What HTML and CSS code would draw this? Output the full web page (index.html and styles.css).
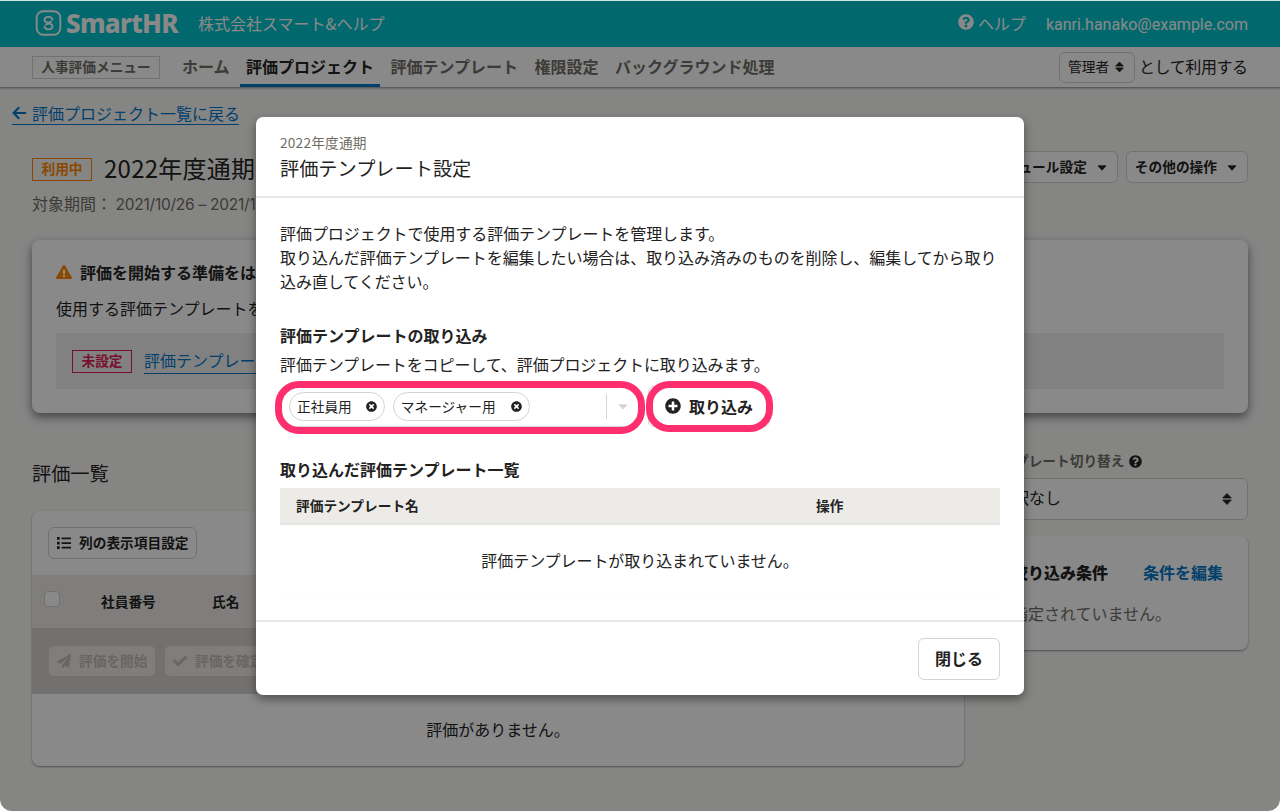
FILE: index.html
```html
<!DOCTYPE html>
<html lang="ja">
<head>
<meta charset="utf-8">
<title>評価テンプレート設定</title>
<link rel="stylesheet" href="styles.css">
</head>
<body>
<svg class="defs" aria-hidden="true">
  <symbol id="i-help" viewBox="0 0 512 512"><path d="M504 256c0 136.997-111.043 248-248 248S8 392.997 8 256C8 119.083 119.043 8 256 8s248 111.083 248 248zM262.655 90c-54.497 0-89.255 22.957-116.549 63.758-3.536 5.286-2.353 12.415 2.715 16.258l34.699 26.31c5.205 3.947 12.621 3.008 16.665-2.122 17.864-22.658 30.113-35.797 57.303-35.797 20.429 0 45.698 13.148 45.698 32.958 0 14.976-12.363 22.667-32.534 33.976C247.128 238.528 216 254.941 216 296v4c0 6.627 5.373 12 12 12h56c6.627 0 12-5.373 12-12v-1.333c0-28.462 83.186-29.647 83.186-106.667 0-58.002-60.165-102-116.531-102zM256 338c-25.365 0-46 20.635-46 46 0 25.364 20.635 46 46 46s46-20.636 46-46c0-25.365-20.635-46-46-46z"/></symbol>
  <symbol id="i-plus" viewBox="0 0 512 512"><path d="M256 8C119 8 8 119 8 256s111 248 248 248 248-111 248-248S393 8 256 8zm144 276c0 6.600-5.400 12-12 12h-92v92c0 6.600-5.400 12-12 12h-56c-6.600 0-12-5.400-12-12v-92h-92c-6.600 0-12-5.400-12-12v-56c0-6.600 5.400-12 12-12h92v-92c0-6.600 5.400-12 12-12h56c6.600 0 12 5.400 12 12v92h92c6.600 0 12 5.400 12 12v56z"/></symbol>
  <symbol id="i-times" viewBox="0 0 512 512"><path d="M256 8C119 8 8 119 8 256s111 248 248 248 248-111 248-248S393 8 256 8zm121.600 313.100c4.700 4.700 4.700 12.300 0 17L338 377.600c-4.700 4.700-12.300 4.700-17 0L256 312l-65.100 65.600c-4.700 4.700-12.300 4.700-17 0L134.400 338c-4.700-4.700-4.700-12.300 0-17l65.600-65-65.600-65.100c-4.700-4.700-4.700-12.300 0-17l39.600-39.600c4.700-4.700 12.300-4.700 17 0l65 65.700 65.100-65.600c4.700-4.700 12.300-4.700 17 0l39.600 39.600c4.700 4.700 4.700 12.300 0 17L312 256l65.600 65.100z"/></symbol>
  <symbol id="i-warn" viewBox="0 0 576 512"><path d="M569.517 440.013C587.975 472.007 564.806 512 527.940 512H48.054c-36.937 0-59.999-40.055-41.577-71.987L246.423 23.985c18.467-32.009 64.720-31.951 83.154 0l239.940 416.028zM288 354c-25.405 0-46 20.595-46 46s20.595 46 46 46 46-20.595 46-46-20.595-46-46-46zm-43.673-165.346l7.418 136c.347 6.364 5.609 11.346 11.982 11.346h48.546c6.373 0 11.635-4.982 11.982-11.346l7.418-136c.375-6.874-5.098-12.654-11.982-12.654h-63.383c-6.884 0-12.356 5.780-11.981 12.654z"/></symbol>
  <symbol id="i-plane" viewBox="0 0 512 512"><path d="M476 3.200L12.500 270.600c-18.100 10.400-15.800 35.600 2.200 43.200L121 358.400l287.300-253.200c5.500-4.900 13.300 2.600 8.600 8.300L176 407v80.500c0 23.600 28.500 32.900 42.500 15.800L282 426l124.600 52.200c14.200 6 30.400-2.900 33-18.200l72-432C515 7.800 493.300-6.800 476 3.200z"/></symbol>
  <symbol id="i-check" viewBox="0 0 512 512"><path d="M173.898 439.404l-166.400-166.400c-9.997-9.997-9.997-26.206 0-36.204l36.203-36.204c9.997-9.998 26.207-9.998 36.204 0L192 312.690 432.095 72.596c9.997-9.997 26.207-9.997 36.204 0l36.203 36.204c9.997 9.997 9.997 26.206 0 36.204l-294.400 294.401c-9.998 9.997-26.207 9.997-36.204-.001z"/></symbol>
  <symbol id="i-sort" viewBox="0 0 10 12"><path d="M5 0.500L9.300 5H0.700z M5 11.500L0.700 7H9.300z" stroke="currentColor" stroke-width=".8" stroke-linejoin="round"/></symbol>
  <symbol id="i-caret" viewBox="0 0 10 6"><path d="M1 .8h8L5 5.200z" stroke="currentColor" stroke-width=".8" stroke-linejoin="round"/></symbol>
  <symbol id="i-list" viewBox="0 0 14 12"><path d="M0 0h2.700v2.700H0zM0 4.700h2.700v2.700H0zM0 9.300h2.700V12H0zM4.600.5H14v1.700H4.600zM4.600 5.200H14v1.700H4.600zM4.600 9.800H14v1.700H4.600z"/></symbol>
  <symbol id="i-back" viewBox="0 0 15 14"><path d="M7.200 1.200L1.600 7l5.600 5.800M1.800 7h12.400" fill="none" stroke="currentColor" stroke-width="2.100"/></symbol>
</svg>

<div class="window">
  <header class="app-header">
    <svg class="logo-mark" viewBox="0 0 26 26"><rect x="1.700" y="1.200" width="23.600" height="23.600" rx="6.500" fill="none" stroke="currentColor" stroke-width="1.900"/><path d="M17.500 9.600C17 7.800 15.600 6.900 13.700 6.900c-2.400 0-4.200 1.300-4.200 3.200 0 3.700 8 2.300 8 6.200 0 1.900-1.700 3.100-4 3.100-2 0-3.500-.9-4-2.700M11 14.600l2.500-1M16 11.600l-2.500 1" fill="none" stroke="currentColor" stroke-width="1.900" stroke-linecap="round"/></svg>
    <span class="logo-text">SmartHR</span>
    <span class="company">株式会社スマート&amp;ヘルプ</span>
    <span class="help"><svg><use href="#i-help"/></svg>ヘルプ</span>
    <span class="email">kanri.hanako@example.com</span>
  </header>
  <nav class="app-nav">
    <span class="menu-tag">人事評価メニュー</span>
    <div class="nav-items">
      <a>ホーム</a><a class="current">評価プロジェクト</a><a>評価テンプレート</a><a>権限設定</a><a>バックグラウンド処理</a>
    </div>
    <span class="role-select">管理者<svg><use href="#i-sort"/></svg></span>
    <span class="role-note">として利用する</span>
  </nav>
  <main>
    <a class="back"><svg><use href="#i-back"/></svg>評価プロジェクト一覧に戻る</a>
    <div class="title-row">
      <span class="badge orange">利用中</span>
      <h1>2022年度通期</h1>
      <button class="btn push">スケジュール設定<svg class="caret"><use href="#i-caret"/></svg></button>
      <button class="btn">その他の操作<svg class="caret"><use href="#i-caret"/></svg></button>
    </div>
    <p class="period">対象期間： <span>2021/10/26 – 2021/1</span></p>
    <section class="notice">
      <h2><svg><use href="#i-warn"/></svg>評価を開始する準備をは</h2>
      <p>使用する評価テンプレートを</p>
      <div class="todo"><span class="badge red">未設定</span><a>評価テンプレー</a></div>
    </section>
    <div class="columns">
      <section class="list-col">
        <h2>評価一覧</h2>
        <div class="panel">
          <div class="toolbar"><button class="btn"><svg class="list"><use href="#i-list"/></svg>列の表示項目設定</button></div>
          <div class="thead"><i class="checkbox"></i><span class="c-num">社員番号</span><span>氏名</span></div>
          <div class="bulk">
            <button><svg><use href="#i-plane"/></svg>評価を開始</button>
            <button><svg><use href="#i-check"/></svg>評価を確定</button>
          </div>
          <p class="empty">評価がありません。</p>
        </div>
      </section>
      <aside>
        <div class="label">テンプレート切り替え<svg><use href="#i-help"/></svg></div>
        <div class="select">選択なし<svg><use href="#i-sort"/></svg></div>
        <div class="filter">
          <div class="filter-head"><b>絞り込み条件</b><a>条件を編集</a></div>
          <p>指定されていません。</p>
        </div>
      </aside>
    </div>
  </main>
  <div class="scrim"></div>
  <div class="dialog">
    <header>
      <small>2022年度通期</small>
      <h2>評価テンプレート設定</h2>
    </header>
    <div class="body">
      <p>評価プロジェクトで使用する評価テンプレートを管理します。<br>取り込んだ評価テンプレートを編集したい場合は、取り込み済みのものを削除し、編集してから取り<br>込み直してください。</p>
      <h3>評価テンプレートの取り込み</h3>
      <p class="desc">評価テンプレートをコピーして、評価プロジェクトに取り込みます。</p>
      <div class="import">
        <div class="combo">
          <span class="chip">正社員用<svg><use href="#i-times"/></svg></span>
          <span class="chip">マネージャー用<svg><use href="#i-times"/></svg></span>
          <span class="toggle"><svg><use href="#i-caret"/></svg></span>
          <i class="mark"></i>
        </div>
        <button class="add"><svg><use href="#i-plus"/></svg>取り込み<i class="mark"></i></button>
      </div>
      <h3 class="second">取り込んだ評価テンプレート一覧</h3>
      <div class="tpl-head"><span>評価テンプレート名</span><span>操作</span></div>
      <p class="tpl-empty">評価テンプレートが取り込まれていません。</p>
    </div>
    <footer><button>閉じる</button></footer>
  </div>
</div>
</body>
</html>
```
FILE: styles.css
```css
* { box-sizing: border-box; }
html { background: #fff; }
body {
  margin: 0;
  font: 16px/24px "Noto Sans CJK JP", sans-serif;
  color: #23221e;
}
h1, h2, h3, p { margin: 0; font-weight: 400; white-space: nowrap; }
button { font: inherit; color: inherit; margin: 0; padding: 0; }
svg { fill: currentColor; flex: none; display: block; overflow: visible; }
.defs { position: absolute; width: 0; height: 0; }

.window {
  position: relative;
  width: 1280px;
  height: 811px;
  overflow: hidden;
  border-radius: 0 0 12px 12px;
  border-top: 1px solid #d3e2e3;
  background: #f8f7f6;
}

/* global header */
.app-header {
  display: flex;
  align-items: center;
  height: 46px;
  padding: 0 32px 0 35px;
  background: #00c4cc;
  color: #fff;
}
.logo-mark { width: 26px; height: 26px; margin-right: 5px; margin-top: -2px; }
.logo-text {
  width: 113px;
  margin-right: 19px;
  margin-top: -3px;
  font: 800 26px/30px "Noto Sans", sans-serif;
  letter-spacing: -0.7px;
}
.company { margin-top: -3px; }
.help { display: flex; align-items: center; margin: -3px 20px 0 auto; }
.help svg { width: 16px; height: 16px; margin: -2px 4px 0 0; }
.email { font-family: Roboto, sans-serif; font-size: 16px; margin-top: 1px; }

.app-nav {
  position: relative;
  display: flex;
  align-items: center;
  height: 40px;
  padding: 0 32px;
  background: #fff;
  box-shadow: 0 1px 2px rgba(3, 3, 2, .45);
}
.menu-tag {
  width: 128px;
  height: 23px;
  border: 1px solid #d6d3d0;
  text-align: center;
  font: bold 13.7px/19px "Noto Sans CJK JP", sans-serif;
  color: #706d65;
}
.nav-items { display: flex; gap: 4.500px; margin-left: 16px; align-self: stretch; font-weight: bold; color: #706d65; }
.nav-items a { padding: 7px 6px 0; border-bottom: 3px solid transparent; white-space: nowrap; }
.nav-items .current { color: #23221e; border-color: #0077c7; }
.role-select {
  display: flex;
  align-items: center;
  width: 76px;
  height: 31px;
  margin: 0 4px 0 auto;
  padding: 0 0 2px 8px;
  border: 1px solid #d6d3d0;
  border-radius: 6px;
  font-size: 13.7px;
}
.role-select svg { width: 9px; height: 12px; margin: 2px 0 0 6px; }
.role-note { width: 109px; white-space: nowrap; margin-top: -3px; letter-spacing: -.4px; }

main { padding: 16px 32px 0; }
.back {
  display: flex;
  align-items: center;
  width: 227px;
  height: 22px;
  margin-left: -20px;
  border-bottom: 1px solid #0077c7;
  color: #0077c7;
  line-height: 21px;
  white-space: nowrap;
}
.back svg { width: 15px; height: 14px; margin: -2px 5px 0 0; }
.title-row { display: flex; align-items: center; margin-top: 26px; gap: 8px; height: 32px; }
.badge {
  flex: none;
  width: 60px;
  height: 23px;
  border: 1px solid;
  text-align: center;
  font-size: 13.7px;
  line-height: 19px;
  font-weight: bold;
}
.orange { color: #f80; }
.red { color: #e01e5a; }
.title-row .badge { margin-top: 5px; }
h1 { font-size: 24px; line-height: 30px; letter-spacing: .25px; margin: 2px 0 0 4px; }
.push { margin-left: auto; }
.btn {
  display: flex;
  align-items: center;
  height: 32px;
  padding: 0 9px 3px 8px;
  border: 1px solid #d6d3d0;
  border-radius: 6px;
  background: #fff;
  font-size: 13.7px;
  font-weight: bold;
  white-space: nowrap;
}
.caret { width: 10px; height: 6px; margin: 5px 1px 0 10px; }
.btn .list { width: 14px; height: 12px; margin: 2px 8px 0 0; }
.toolbar .btn { width: 149px; padding-right: 0; }
.period { height: 24px; margin-top: 8px; color: #706d65; }
.period span { font-family: Inter, sans-serif; font-size: 15.500px; letter-spacing: -.25px; }

.notice {
  height: 173px;
  margin-top: 25px;
  padding: 24px;
  border-radius: 8px;
  background: #fff;
  box-shadow: 0 4px 10px rgba(3, 3, 2, .5);
}
.notice h2 { display: flex; align-items: center; font-size: 16px; line-height: 16px; font-weight: bold; }
.notice h2 svg { width: 16px; height: 14px; margin: 0 8px 0 0; color: #f80; }
.notice p { margin-top: 16px; }
.todo {
  display: flex;
  align-items: center;
  gap: 12px;
  height: 56px;
  margin-top: 13px;
  padding: 1px 16px 0;
  background: #f2f1f0;
}
.todo a { color: #0077c7; border-bottom: 1px solid #0077c7; line-height: 23px; padding-bottom: 1px; }

.columns { display: flex; gap: 24px; }
.list-col { width: 932px; padding-top: 48px; }
.list-col h2 { font-size: 19.2px; }
.panel {
  margin-top: 26px;
  height: 255px;
  overflow: hidden;
  border-radius: 8px;
  background: #fff;
  box-shadow: 0 1px 2px rgba(3, 3, 2, .4);
}
.toolbar { padding: 16px; display: flex; }
.thead {
  display: flex;
  align-items: flex-start;
  height: 53px;
  padding: 16px 12px;
  background: #edebe8;
  font-size: 13.7px;
  font-weight: bold;
  line-height: 20px;
}
.checkbox { width: 16px; height: 16px; margin-right: 41px; border: 1px solid #d6d3d0; border-radius: 4px; background: #fff; }
.c-num { width: 111px; }
.bulk { display: flex; gap: 10px; height: 66px; padding: 18px 17px; background: #d6d3d0; }
.bulk button {
  display: flex;
  align-items: center;
  height: 30px;
  width: 106px;
  padding: 0 8px 3px;
  border: 0;
  border-radius: 5px;
  background: #edebe8;
  color: #c1bdb7;
  font-size: 13.7px;
  font-weight: bold;
  white-space: nowrap;
}
.bulk svg { width: 14px; height: 14px; margin: 3px 8px 0 0; }
.empty { line-height: 70px; text-align: center; }

aside { width: 260px; padding-top: 37px; }
.label { display: flex; align-items: center; height: 20px; color: #706d65; font-size: 13.7px; font-weight: bold; }
.label svg { width: 13px; height: 13px; margin: 3px 0 0 4.500px; color: #23221e; }
.select {
  display: flex;
  align-items: center;
  justify-content: space-between;
  height: 42px;
  margin-top: 8px;
  padding: 0 15px 4px 8px;
  border: 1px solid #d6d3d0;
  border-radius: 6px;
  background: #fff;
}
.select svg { width: 10px; height: 12px; margin-top: 4px; }
.filter { height: 114px; margin-top: 16px; padding: 24px; border-radius: 8px; background: #fff; box-shadow: 0 1px 2px rgba(3, 3, 2, .4); }
.filter-head { display: flex; justify-content: space-between; font-weight: bold; }
.filter-head a { color: #0077c7; margin-right: 1px; }
.filter p { margin-top: 17px; color: #706d65; }

.scrim { position: absolute; inset: 0; background: rgba(3, 3, 2, .465); }

/* dialog */
.dialog {
  position: absolute;
  left: 256px;
  top: 116px;
  width: 768px;
  height: 578px;
  border-radius: 7px;
  background: #fff;
  box-shadow: 0 4px 10px rgba(3, 3, 2, .42);
}
.dialog header { height: 81px; padding: 16px 24px 0; border-bottom: 2px solid #e8e8e7; }
.dialog small { display: block; height: 20px; font-size: 13.7px; line-height: 18px; letter-spacing: .2px; color: #706d65; }
.dialog header h2 { font-size: 19.2px; line-height: 30px; }
.body { height: 422px; padding: 23px 24px 0; }
.body p { letter-spacing: -.06px; }
.body h3 { margin-top: 30px; font-size: 16px; font-weight: bold; }
.body .desc { margin-top: 5px; letter-spacing: -.1px; }
.import { display: flex; gap: 8px; margin-top: 10px; }
.combo {
  position: relative;
  display: flex;
  align-items: center;
  gap: 8px;
  width: 360px;
  height: 41px;
  padding: 0 8px;
  border: 1px solid #d6d3d0;
  border-radius: 6px;
}
.chip {
  display: flex;
  align-items: center;
  height: 29px;
  padding: 0 7px 1px;
  border: 1px solid #d6d3d0;
  border-radius: 15px;
  font-size: 13.7px;
  white-space: nowrap;
}
.chip svg { width: 11px; height: 11px; margin: 1px 0 0 14px; }
.chip + .chip svg { margin-left: 15px; }
.toggle { display: flex; align-items: center; margin-left: auto; height: 25px; padding: 0 3px 0 11px; border-left: 1px solid #d6d3d0; color: #d6d3d0; }
.toggle svg { width: 10px; height: 6px; }
.mark { position: absolute; border: 7px solid #ff2e6e; pointer-events: none; }
.combo .mark { left: -6px; top: -6px; width: 370px; height: 53px; border-radius: 24px; }
.add {
  position: relative;
  display: flex;
  align-items: center;
  width: 122px;
  height: 41px;
  padding: 0 0 1px 16px;
  border: 1px solid #d6d3d0;
  border-radius: 6px;
  background: #fff;
  font-weight: bold;
}
.add svg { width: 16px; height: 16px; margin-right: 8px; }
.add .mark { left: -3px; top: -6px; width: 127px; height: 51px; border-radius: 23px; }
.body .second { margin-top: 30px; }
.tpl-head {
  display: flex;
  height: 37px;
  margin-top: 7px;
  padding: 0 16px;
  border-bottom: 2px solid #e6e4e1;
  background: #edebe8;
  font-size: 13.7px;
  font-weight: bold;
  line-height: 34px;
}
.tpl-head span:first-child { width: 520px; }
.body .tpl-empty { height: 72px; line-height: 70px; text-align: center; border-bottom: 1px solid #fdfdfd; }
.dialog footer { display: flex; justify-content: flex-end; height: 75px; padding: 16px 24px; border-top: 2px solid #e8e8e7; }
.dialog footer button { width: 82px; height: 42px; padding-bottom: 2px; border: 1px solid #d6d3d0; border-radius: 6px; background: #fff; font-weight: bold; }
```
